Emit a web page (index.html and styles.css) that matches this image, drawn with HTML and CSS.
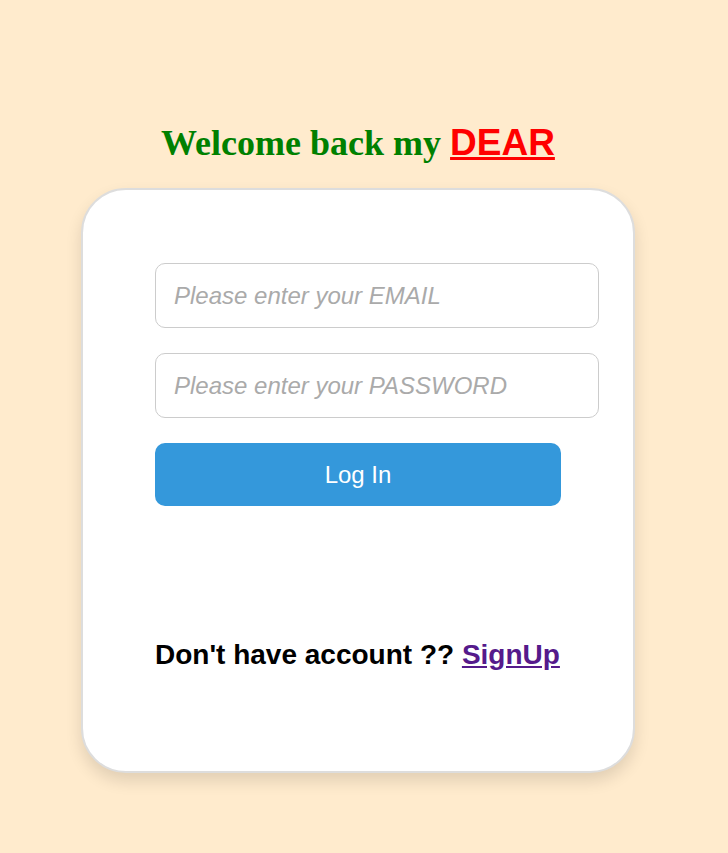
FILE: index.html
```html
<!DOCTYPE html>
<html>
<head>
<meta charset="utf-8">
<link rel="stylesheet" href="styles.css">
</head>
<body>
<div class="page">
  <h1 class="title">Welcome back my <a href="#" class="dear">DEAR</a></h1>
  <div class="card">
    <form class="form">
      <input class="field" type="email" placeholder="Please enter your EMAIL">
      <input class="field" type="password" placeholder="Please enter your PASSWORD">
      <button class="btn" type="button">Log In</button>
    </form>
    <p class="signup">Don't have account ?? <a href="#" class="link">SignUp</a></p>
  </div>
</div>
</body>
</html>
```
FILE: styles.css
```css
html, body {
  margin: 0;
  padding: 0;
}
body {
  background: #ffebcd;
  min-height: 853px;
}
.page {
  display: flex;
  flex-direction: column;
  align-items: center;
  padding-top: 120px;
  padding-right: 12px;
}
.title {
  margin: 0 0 22px 0;
  font-family: "Liberation Serif", serif;
  font-weight: bold;
  font-size: 36px;
  line-height: 46px;
  color: green;
}
.dear {
  font-family: "Liberation Sans", sans-serif;
  font-size: 37px;
  color: red;
}
.card {
  box-sizing: border-box;
  width: 554px;
  background: #fff;
  border: 2px solid #ddd;
  border-radius: 45px;
  padding: 73px 72px 0 72px;
  height: 585px;
  box-shadow: 0 8px 16px rgba(0,0,0,0.12);
}
.form {
  display: flex;
  flex-direction: column;
  gap: 25px;
  width: 406px;
}
.field {
  width: 406px;
  box-sizing: content-box;
  padding: 0 18px;
  height: 63px;
  border: 1px solid #ccc;
  border-radius: 10px;
  font-family: "Liberation Sans", sans-serif;
  font-size: 24px;
  color: #333;
  outline: none;
}
.field::placeholder {
  font-style: italic;
  color: #aaa;
}
.btn {
  width: 406px;
  height: 63px;
  border: none;
  border-radius: 10px;
  background: #3498db;
  color: #fff;
  font-family: "Liberation Sans", sans-serif;
  font-size: 24px;
}
.signup {
  margin: 133px 0 0 0;
  font-family: "Liberation Sans", sans-serif;
  font-weight: bold;
  font-size: 28px;
  line-height: 32px;
  color: #000;
}
.link {
  color: #551a8b;
}
```
